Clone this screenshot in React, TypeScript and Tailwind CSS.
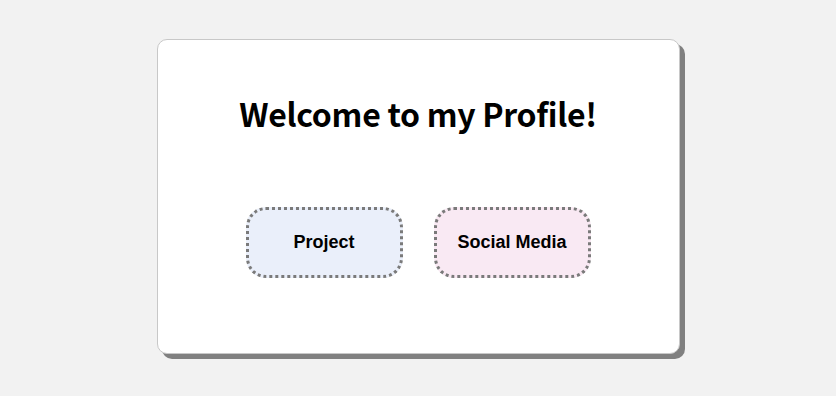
export default function App() {
  return (
    <div className="min-h-[396px] w-full bg-[#f2f2f2] pt-[39px]">
      <div className="mx-auto flex h-[315px] w-[523px] flex-col items-center rounded-[10px] border border-[#c8c8c8] bg-white shadow-[5px_5px_0_#808080]">
        <h1 className="mt-[51px] text-[32px] font-bold leading-[44px] tracking-[-0.3px] text-black [font-family:'Noto_Sans_CJK_KR','Noto_Sans',sans-serif]">
          Welcome to my Profile!
        </h1>
        <div className="mt-[72px] flex gap-[31px]">
          <button className="h-[71px] w-[157px] rounded-[20px] border-[3px] border-dotted border-[#7a7a7a] bg-[#eaeffa] text-[18px] font-bold text-black [font-family:'Liberation_Sans',Arial,sans-serif]">
            Project
          </button>
          <button className="h-[71px] w-[157px] rounded-[20px] border-[3px] border-dotted border-[#7a7a7a] bg-[#f9e9f3] text-[18px] font-bold text-black [font-family:'Liberation_Sans',Arial,sans-serif]">
            Social Media
          </button>
        </div>
      </div>
    </div>
  );
}
